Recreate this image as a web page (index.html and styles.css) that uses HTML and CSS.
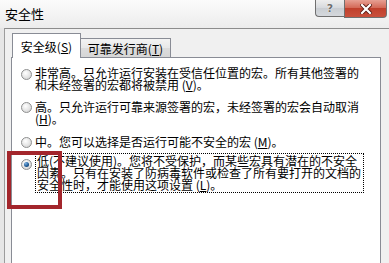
FILE: index.html
```html
<!DOCTYPE html>
<html lang="zh-CN">
<head>
<meta charset="utf-8">
<title>安全性</title>
<link rel="stylesheet" href="styles.css">
</head>
<body>
<div class="window">
  <div class="titlebar">
    <span class="title">安全性</span>
    <div class="caption">
      <div class="cap-btn help"><span class="q">?</span></div>
      <div class="cap-btn close">
        <svg width="12" height="10" viewBox="0 0 12 10"><path d="M2 1 L10 9 M10 1 L2 9" stroke="#5a1a12" stroke-width="4" stroke-linecap="square"/><path d="M2 1 L10 9 M10 1 L2 9" stroke="#fff" stroke-width="2.2" stroke-linecap="square"/></svg>
      </div>
    </div>
  </div>
  <div class="client">
    <div class="tabs">
      <div class="tab active">安全级(<u>S</u>)</div>
      <div class="tab">可靠发行商(<u>T</u>)</div>
    </div>
    <div class="panel">
      <div class="option opt1">
        <span class="radio"></span>
        <span class="label">非常高。只允许运行安装在受信任位置的宏。所有其他签署的<br>和未经签署的宏都将被禁用 (<u>V</u>)。</span>
      </div>
      <div class="option opt2">
        <span class="radio"></span>
        <span class="label">高。只允许运行可靠来源签署的宏，未经签署的宏会自动取消<br>(<u>H</u>)。</span>
      </div>
      <div class="option opt3">
        <span class="radio"></span>
        <span class="label">中。您可以选择是否运行可能不安全的宏 (<u>M</u>)。</span>
      </div>
      <div class="option opt4">
        <span class="radio checked"></span>
        <span class="label focus">低(不建议使用)。您将不受保护，而某些宏具有潜在的不安全<br>因素。只有在安装了防病毒软件或检查了所有要打开的文档的<br>安全性时，才能使用这项设置 (<u>L</u>)。</span>
      </div>
    </div>
  </div>
  <div class="highlight"></div>
</div>
</body>
</html>
```
FILE: styles.css
```css
html, body {
  margin: 0;
  padding: 0;
}
body {
  width: 389px;
  height: 263px;
  overflow: hidden;
  background: #e6e6e6;
  font-family: "Noto Sans CJK SC", "Noto Sans", sans-serif;
  color: #000;
}
.window {
  position: relative;
  width: 389px;
  height: 263px;
  display: flex;
  flex-direction: column;
}
.titlebar {
  height: 28px;
  flex: none;
  display: flex;
  align-items: flex-start;
  background: linear-gradient(#fbfbfb, #ececec);
}
.title {
  font-size: 13px;
  line-height: 13px;
  margin: 7px 0 0 5px;
}
.caption {
  margin-left: auto;
  margin-right: 2px;
  display: flex;
}
.cap-btn {
  box-sizing: border-box;
  border: 1px solid #6f6f6f;
  border-top: none;
  display: flex;
  align-items: center;
  justify-content: center;
}
.help {
  width: 29px;
  height: 17px;
  border-right: none;
  border-bottom-left-radius: 4px;
  background: linear-gradient(#eeeeee, #d6d9dd 50%, #c9cdd2 51%, #d5d8dc);
}
.q {
  font-family: "DejaVu Sans", sans-serif;
  font-size: 11px;
  font-weight: bold;
  line-height: 11px;
  color: #6d6d6d;
  text-shadow: 0 0 1px #fff, 0 0 1px #fff;
}
.close {
  width: 43px;
  height: 18px;
  border-bottom-right-radius: 4px;
  background: linear-gradient(#e7a093, #d46a58 45%, #c0402c 50%, #c9503c);
}
.client {
  flex: 1;
  margin-left: 4px;
  border-left: 1px solid #9c9c9c;
  border-top: 1px solid #8c8c8c;
  background: #f0f0f0;
  padding: 4px 8px 0 6px;
  display: flex;
  flex-direction: column;
}
.tabs {
  height: 24px;
  display: flex;
  align-items: flex-end;
  margin-left: 1px;
  flex: none;
}
.tab {
  box-sizing: border-box;
  border: 1px solid #898c95;
  border-bottom: none;
  font-size: 12px;
  line-height: 12px;
  white-space: nowrap;
  text-align: center;
}
.tab.active {
  position: relative;
  z-index: 1;
  width: 69px;
  height: 25px;
  margin-bottom: -1px;
  padding-top: 7px;
  background: #fff;
}
.tab:not(.active) {
  width: 91px;
  height: 19px;
  margin-left: -1px;
  padding-top: 4px;
  background: linear-gradient(#f3f3f3, #e8e8e8 50%, #dcdcdc 51%, #d6d6d6);
}
.panel {
  flex: 1;
  box-sizing: border-box;
  width: 370px;
  border: 1px solid #898c95;
  border-bottom: none;
  background: #fff;
  padding: 9px 0 0 9px;
  display: flex;
  flex-direction: column;
}
.option {
  display: flex;
  align-items: flex-start;
  gap: 3px;
}
.opt2 { margin-top: 10px; }
.opt3 { margin-top: 11px; }
.opt4 { margin-top: 5px; }
.label {
  font-size: 12px;
  line-height: 12px;
  white-space: nowrap;
}
.label.focus {
  border: 1px dotted #000;
  padding: 1px 2px 1px 1px;
}
.radio {
  flex: none;
  box-sizing: border-box;
  width: 11px;
  height: 11px;
  border-radius: 50%;
  border: 1px solid #8e8f8f;
  background: radial-gradient(circle at 40% 35%, #ffffff, #e4e4e4 55%, #c9c9c9);
  margin-top: 1px;
  display: flex;
  align-items: center;
  justify-content: center;
}
.opt1 .radio { margin-top: 2px; }
.opt4 .radio { margin-top: 6px; }
.radio.checked::after {
  content: "";
  width: 5px;
  height: 5px;
  border-radius: 50%;
  background: radial-gradient(circle at 35% 30%, #7fb1e0, #1f5d99 55%, #0d2d52);
}
.highlight {
  position: absolute;
  left: 7px;
  top: 151px;
  width: 55px;
  height: 58px;
  box-sizing: border-box;
  border: 4px solid #a3262c;
}
```
